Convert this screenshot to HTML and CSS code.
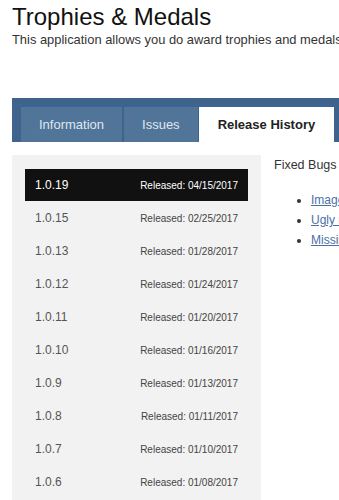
FILE: index.html
```html
<!DOCTYPE html>
<html lang="en">
<head>
    <meta charset="UTF-8">
    <meta name="viewport" content="width=device-width, initial-scale=1.0">
    <title>Trophies &amp; Medals</title>
    <link rel="stylesheet" href="styles.css">
</head>
<body>
<div class="page">
    <h1>Trophies &amp; Medals</h1>
    <p class="intro">This application allows you do award trophies and medals</p>

    <div class="tabs">
        <a class="tab" href="#">Information</a>
        <a class="tab" href="#">Issues</a>
        <a class="tab active" href="#">Release History</a>
    </div>

    <div class="content">
        <div class="releases">
            <div class="release selected"><span class="version">1.0.19</span><span class="date">Released: 04/15/2017</span></div>
            <div class="release"><span class="version">1.0.15</span><span class="date">Released: 02/25/2017</span></div>
            <div class="release"><span class="version">1.0.13</span><span class="date">Released: 01/28/2017</span></div>
            <div class="release"><span class="version">1.0.12</span><span class="date">Released: 01/24/2017</span></div>
            <div class="release"><span class="version">1.0.11</span><span class="date">Released: 01/20/2017</span></div>
            <div class="release"><span class="version">1.0.10</span><span class="date">Released: 01/16/2017</span></div>
            <div class="release"><span class="version">1.0.9</span><span class="date">Released: 01/13/2017</span></div>
            <div class="release"><span class="version">1.0.8</span><span class="date">Released: 01/11/2017</span></div>
            <div class="release"><span class="version">1.0.7</span><span class="date">Released: 01/10/2017</span></div>
            <div class="release"><span class="version">1.0.6</span><span class="date">Released: 01/08/2017</span></div>
        </div>

        <div class="notes">
            <p class="notes-title">Fixed Bugs</p>
            <ul>
                <li><a href="#">Images not showing on trophy page</a></li>
                <li><a href="#">Ugly medal layout on small screens</a></li>
                <li><a href="#">Missing translations</a></li>
            </ul>
        </div>
    </div>
</div>
</body>
</html>
```

FILE: styles.css
```css
html, body {
    margin: 0;
    padding: 0;
    background: #fff;
}
body {
    font-family: "Liberation Sans", Arial, sans-serif;
    color: #222;
}
.page {
    padding-left: 12px;
    overflow: hidden;
    white-space: nowrap;
}
h1 {
    margin: 3px 0 0;
    font-size: 24px;
    line-height: 28px;
    font-weight: normal;
    color: #111;
}
.intro {
    margin: 1px 0 0;
    font-size: 12.9px;
    line-height: 15px;
    color: #333;
}
.tabs {
    display: flex;
    margin-top: 51px;
    height: 44px;
    box-sizing: border-box;
    padding: 9px 0 0 9px;
    background-color: #3e648e;
}
.tab {
    display: block;
    height: 35px;
    line-height: 35px;
    padding: 0 18px;
    margin-right: 2px;
    font-size: 13px;
    color: #dfe7ef;
    text-decoration: none;
    background-color: #517599;
}
.tab.active {
    margin-left: -1px;
    padding: 0 19px;
    background-color: #fff;
    color: #222;
    font-weight: bold;
}
.content {
    display: flex;
    margin-top: 13px;
}
.releases {
    flex: none;
    width: 249px;
    box-sizing: border-box;
    padding: 14px 13px;
    background-color: #f2f2f2;
}
.release {
    display: flex;
    justify-content: space-between;
    align-items: center;
    height: 32px;
    margin-bottom: 1px;
    padding: 0 10px;
    color: #555;
}
.version {
    font-size: 12px;
}
.date {
    font-size: 10px;
    color: #444;
}
.release.selected {
    background-color: #111;
    color: #fff;
}
.release.selected .date {
    color: #fff;
}
.notes {
    flex: none;
    margin-left: 13px;
    padding-top: 3px;
}
.notes-title {
    margin: 0;
    font-size: 12.5px;
    line-height: 14px;
    color: #333;
}
.notes ul {
    margin: 18px 0 0;
    padding-left: 37px;
}
.notes li {
    font-size: 12px;
    line-height: 20px;
    color: #333;
}
.notes a {
    color: #4a6fa5;
}
```
